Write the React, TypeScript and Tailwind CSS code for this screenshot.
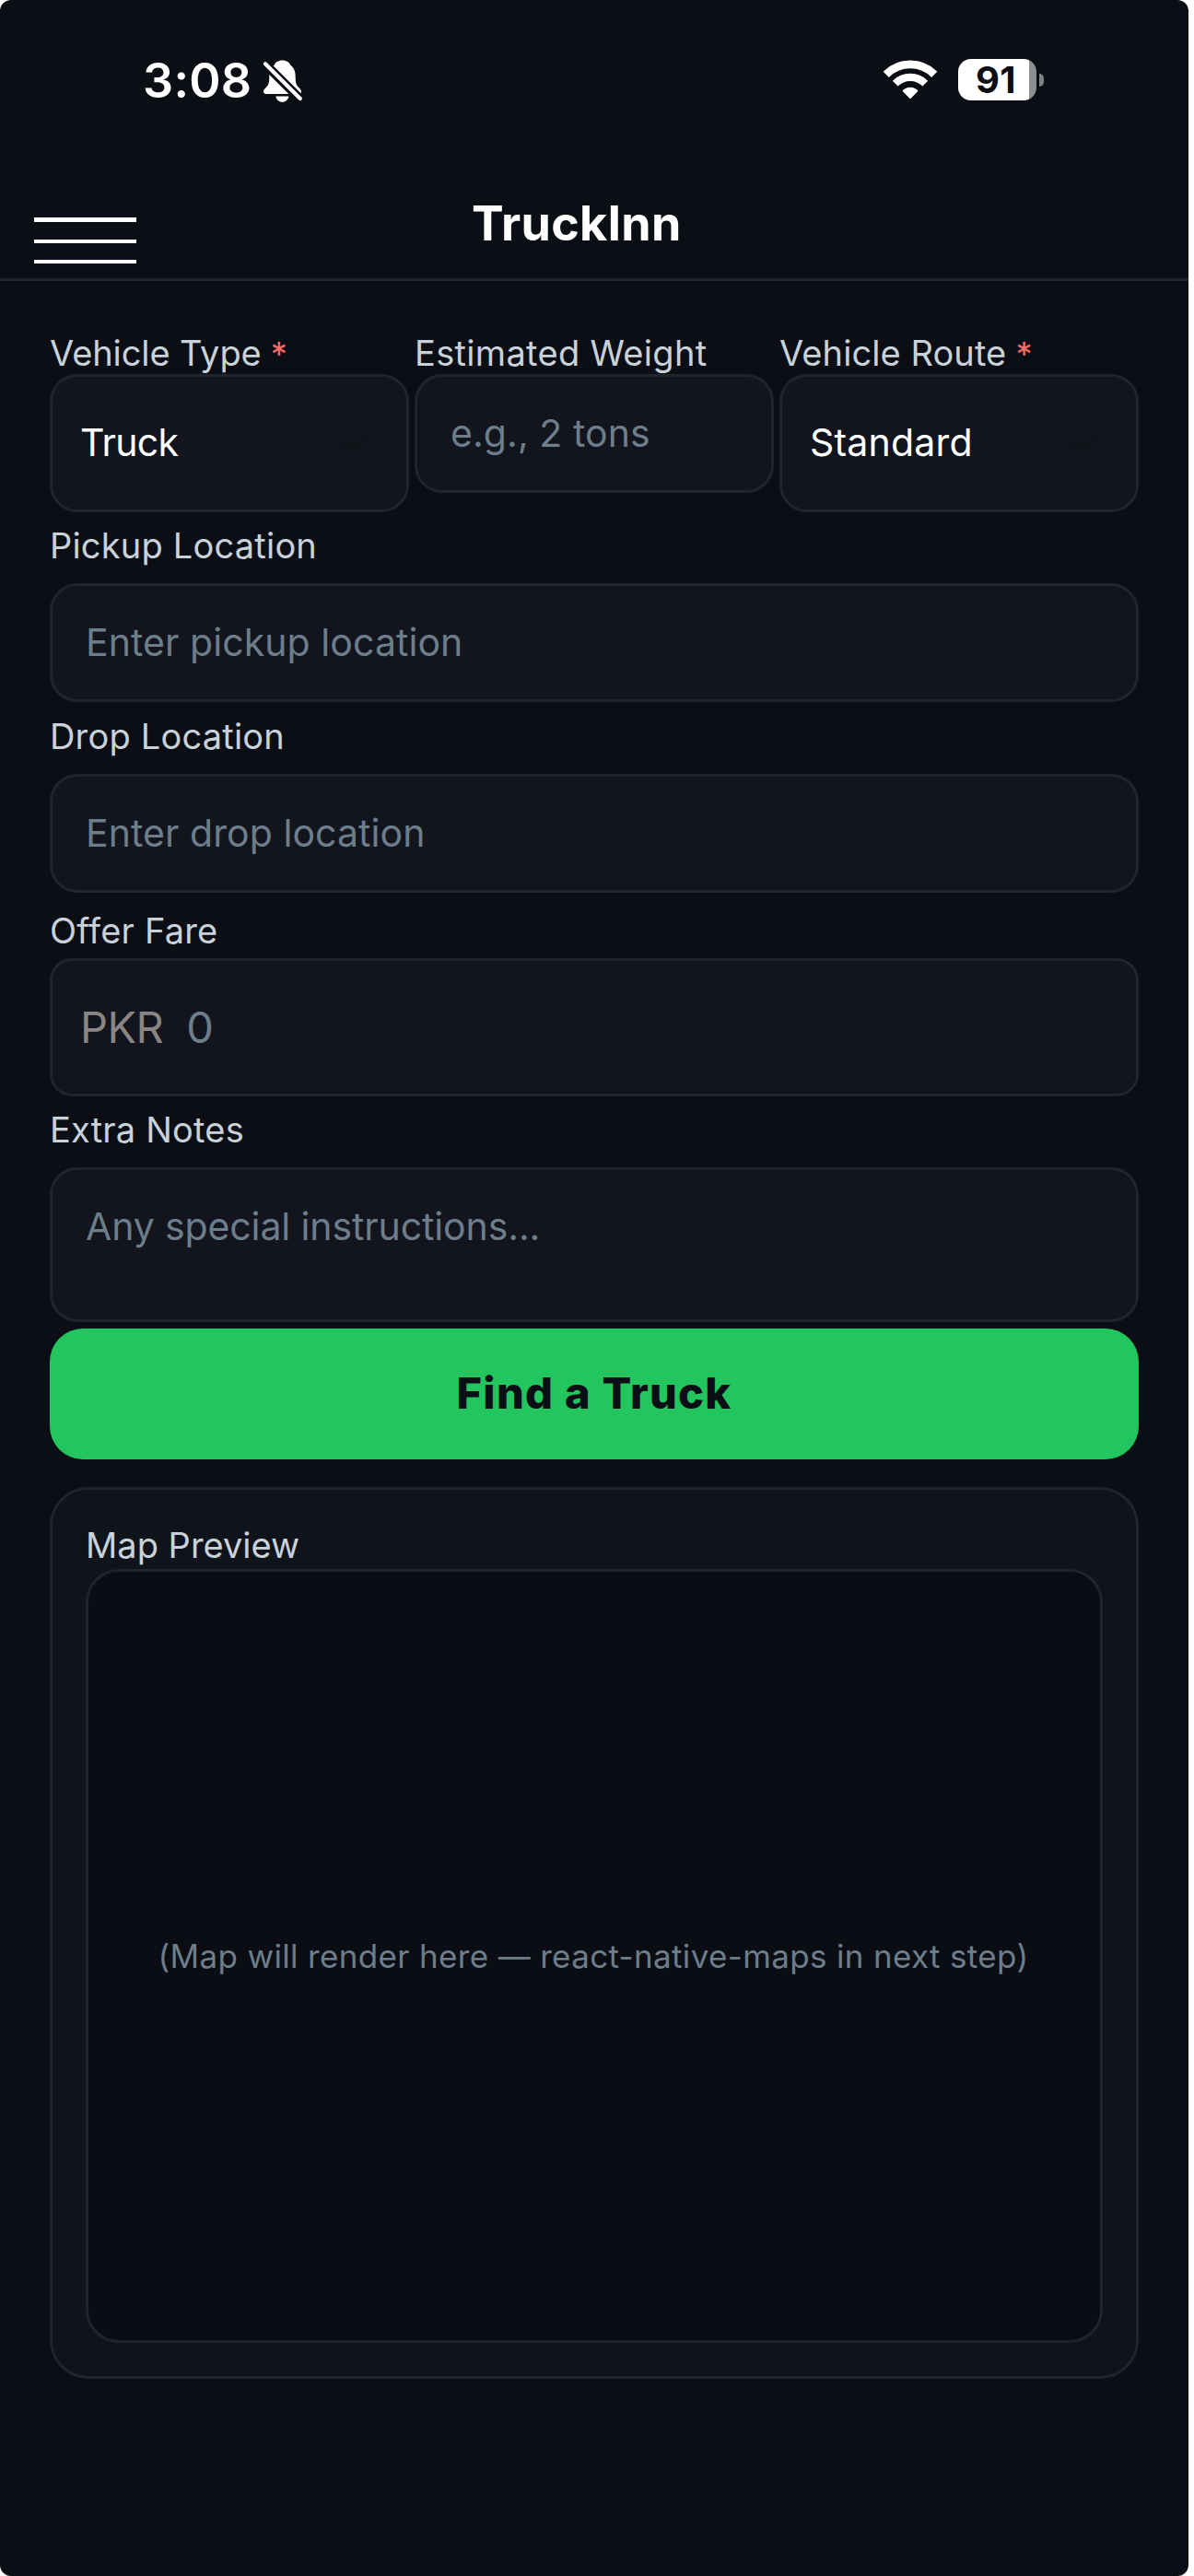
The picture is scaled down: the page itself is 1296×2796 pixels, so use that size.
import type { ReactNode } from "react";

function BellOff() {
  return (
    <svg width="44" height="48" viewBox="285 64 44 48" fill="none">
      <mask id="bell-cut" maskUnits="userSpaceOnUse" x="285" y="64" width="44" height="48">
        <rect x="285" y="64" width="44" height="48" fill="#fff" />
        <path d="M283 64.7 330 111.7" stroke="#000" strokeWidth="9.8" />
      </mask>
      <g fill="#fff" mask="url(#bell-cut)">
        <path d="M306.5 65.4c-4.6 0-7.8 2.3-8.8 5.4-3.9 2.6-5.4 7-5.4 12.2 0 6.8-.9 9.4-3.6 12.1-1.9 1.9-2.7 3-2.7 4.4 0 1.5 1.2 2.4 3 2.4h35c1.8 0 3-.9 3-2.4 0-1.4-.8-2.5-2.7-4.4-2.7-2.7-3.6-5.3-3.6-12.1 0-5.2-1.5-9.6-5.4-12.2-1-3.1-4.2-5.4-8.8-5.4Z" />
        <path d="M299.3 104.4h14.200c-.7 3.700-3.500 6.300-7.100 6.300s-6.400-2.600-7.100-6.300Z" />
      </g>
      <path d="M288 69.2 325.8 107" stroke="#fff" strokeWidth="4.200" strokeLinecap="round" />
    </svg>
  );
}

function Wifi() {
  return (
    <svg width="58" height="44" viewBox="-29 -43 58 44" fill="none">
      <path d="M-26.200-26.200A37 37 0 0 1 26.200-26.200" stroke="#fff" strokeWidth="8.800" />
      <path d="M-16.300-16.300A23 23 0 0 1 16.300-16.300" stroke="#fff" strokeWidth="8.200" />
      <path
        d="M-7.800-8.300C-3.500-12.800 3.500-12.800 7.800-8.300L0-.500Z"
        fill="#fff"
        stroke="#fff"
        strokeWidth="1.200"
        strokeLinejoin="round"
      />
    </svg>
  );
}

function Battery() {
  return (
    <div className="flex items-center gap-[3px]">
      <div className="flex h-[45px] w-[85px] items-center justify-center rounded-[14px] bg-[linear-gradient(to_right,#fff_77px,#8c8d90_77px)]">
        <span className="mr-[3px] text-[40px] leading-[45px] font-bold tracking-[0.5px] text-[#0b0e14]">91</span>
      </div>
      <div className="h-[14px] w-[5px] rounded-r-[6px] bg-[#7f8084]" />
    </div>
  );
}

function Label({
  children,
  required,
  tracking = "tracking-[0.2px]",
}: {
  children: ReactNode;
  required?: boolean;
  tracking?: string;
}) {
  return (
    <div className={`h-[46px] text-[38px] leading-[46px] whitespace-nowrap text-[#c9d1d9] ${tracking}`}>
      {children}
      {required && <span className="text-[36px] text-[#ff6b6b]"> *</span>}
    </div>
  );
}

function Select({
  label,
  value,
  tracking,
  labelTracking,
}: {
  label: string;
  value: string;
  tracking: string;
  labelTracking: string;
}) {
  return (
    <div className="w-[390px]">
      <Label required tracking={labelTracking}>
        {label}
      </Label>
      <div className="flex h-[150px] items-center justify-between rounded-[30px] border-[3px] border-[#20252d] bg-[#12151d] pr-[41px] pb-[2px] pl-[30px]">
        <span className={`text-[41px] leading-[50px] text-white ${tracking}`}>{value}</span>
        <svg width="38" height="22" viewBox="0 0 38 22" fill="none" className="mt-[3px]">
          <path d="M3 3 19 18 35 3" stroke="#111318" strokeWidth="5" />
        </svg>
      </div>
    </div>
  );
}

function Field({ placeholder }: { placeholder: string }) {
  return (
    <div className="flex h-[129px] items-center rounded-[30px] border-[3px] border-[#20252d] bg-[#12151d] px-9 pb-[2px] text-[41px] leading-[50px] tracking-[0.06px] whitespace-nowrap text-[#6d7d8a]">
      {placeholder}
    </div>
  );
}

export default function App() {
  return (
    <div className="h-[2796px] w-[1296px] overflow-hidden bg-white font-[Inter,sans-serif]">
      <div className="h-[2796px] w-[1290px] rounded-xl bg-[#0b0e14]">
        <header className="h-[305px] border-b-[3px] border-[#20252d]">
          <div className="flex h-[172px] items-start pt-[54px] pl-[155px] text-white">
            <span className="h-[64px] w-[130px] text-[52px] leading-[68px] font-semibold tracking-[0.3px]">3:08</span>
            <div className="mt-[10px]">
              <BellOff />
            </div>
            <div className="mt-[10px] ml-[630px]">
              <Wifi />
            </div>
            <div className="mt-[10px] ml-[23px]">
              <Battery />
            </div>
          </div>
          <div className="flex items-start pl-[37px]">
            <div className="mt-[64px] w-[111px]">
              <div className="h-[5px] bg-white" />
              <div className="mt-[19px] h-1 bg-white" />
              <div className="mt-[18px] h-1 bg-white" />
            </div>
            <h1 className="mt-[39px] ml-[364px] text-[52px] leading-[64px] font-bold tracking-[0.28px] text-white">
              TruckInn
            </h1>
          </div>
        </header>

        <main className="px-[54px] pt-[55px]">
          <div className="flex items-start gap-[6px]">
            <Select
              label="Vehicle Type"
              value="Truck"
              tracking="tracking-[-0.7px]"
              labelTracking="tracking-[-0.1px]"
            />
            <div className="w-[390px]">
              <Label tracking="tracking-[0.32px]">Estimated Weight</Label>
              <Field placeholder="e.g., 2 tons" />
            </div>
            <Select
              label="Vehicle Route"
              value="Standard"
              tracking="tracking-[0.2px]"
              labelTracking="tracking-[0.08px]"
            />
          </div>

          <div className="mt-[13px] flex flex-col gap-[18px]">
            <Label>Pickup Location</Label>
            <Field placeholder="Enter pickup location" />
          </div>

          <div className="mt-[14px] flex flex-col gap-[18px]">
            <Label>Drop Location</Label>
            <Field placeholder="Enter drop location" />
          </div>

          <div className="mt-[18px] flex flex-col gap-[7px]">
            <Label>Offer Fare</Label>
            <div className="flex h-[150px] items-center gap-[25px] rounded-[24px] border-[3px] border-[#20252d] bg-[#12151d] px-[30px] text-[47px] leading-[58px]">
              <span className="tracking-[-0.5px] text-[#888583]">PKR</span>
              <span className="text-[#6d7d8a]">0</span>
            </div>
          </div>

          <div className="mt-[13px] flex flex-col gap-[18px]">
            <Label>Extra Notes</Label>
            <div className="h-[168px] rounded-[30px] border-[3px] border-[#20252d] bg-[#12151d] px-9 pt-9 text-[41px] leading-[50px] tracking-[-0.12px] text-[#6d7d8a]">
              Any special instructions...
            </div>
          </div>

          <button className="mt-[7px] flex h-[142px] w-full items-center justify-center rounded-[36px] bg-[#22c55e] pb-[2px] text-[47px] leading-[56px] font-extrabold tracking-[1.3px] text-[#0b0e14]">
            Find a Truck
          </button>

          <section className="mt-[30px] h-[968px] rounded-[42px] border-[3px] border-[#20252d] bg-[#0f131b] px-9 pt-[37px]">
            <Label tracking="tracking-normal">Map Preview</Label>
            <div className="mt-[3px] flex h-[840px] items-center justify-center rounded-[36px] border-[3px] border-[#20252d] bg-[#0a0d14]">
              <span className="mr-[2px] text-[35px] leading-[44px] tracking-[0.34px] whitespace-nowrap text-[#6d7d8a]">
                (Map will render here — react-native-maps in next step)
              </span>
            </div>
          </section>
        </main>
      </div>
    </div>
  );
}
